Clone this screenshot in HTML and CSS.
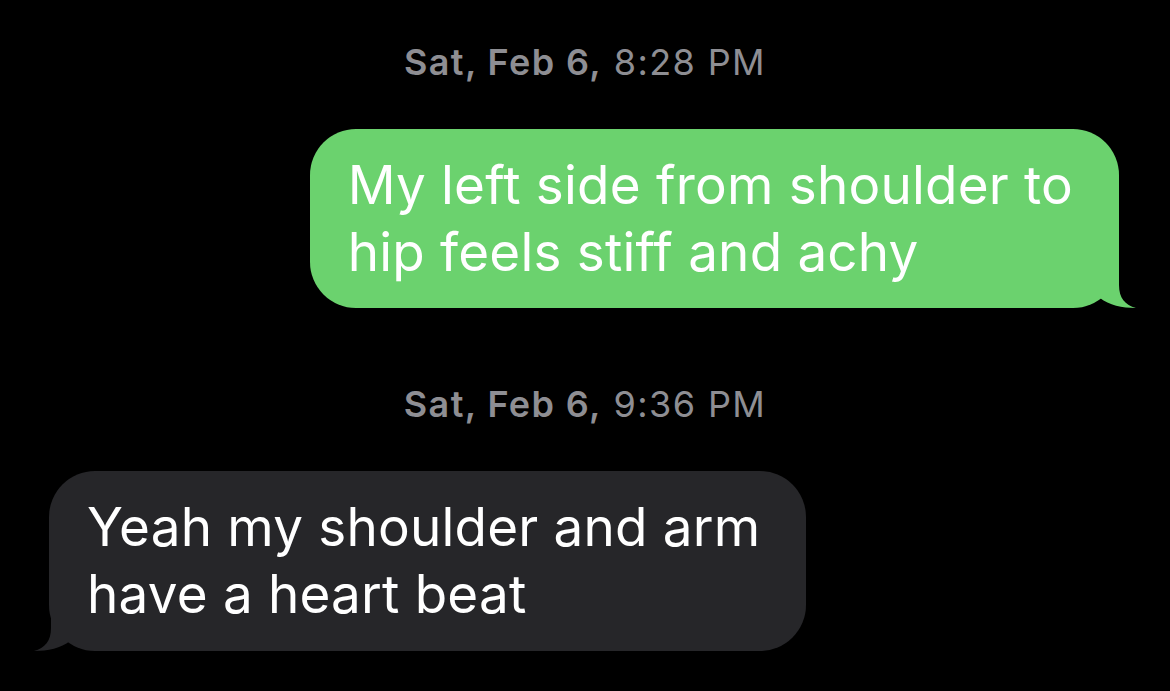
FILE: index.html
```html
<!DOCTYPE html>
<html lang="en">
<head>
  <meta charset="UTF-8">
  <meta name="viewport" content="width=device-width, initial-scale=1">
  <title>Messages</title>
  <link rel="stylesheet" href="styles.css">
</head>
<body>
  <div class="thread">
    <div class="stamp"><b>Sat, Feb 6,</b> 8:28 PM</div>

    <div class="row sent">
      <div class="bubble">
        <svg class="tail" viewBox="0 0 60 60" width="60" height="60">
          <path d="M41,0 L41,37 C41,50 47,57 58,60 C44,60 31,57 22,50 L0,50 L0,0 Z"/>
        </svg>
        <span class="text">My left side from shoulder to<br>hip feels stiff and achy</span>
      </div>
    </div>

    <div class="stamp"><b>Sat, Feb 6,</b> 9:36 PM</div>

    <div class="row received">
      <div class="bubble">
        <svg class="tail" viewBox="0 0 60 60" width="60" height="60">
          <path d="M41,0 L41,37 C41,50 47,57 58,60 C44,60 31,57 22,50 L0,50 L0,0 Z"/>
        </svg>
        <span class="text">Yeah my shoulder and arm<br>have a heart beat</span>
      </div>
    </div>
  </div>
</body>
</html>
```

FILE: styles.css
```css
body {
  margin: 0;
  background: #000;
  font-family: Inter, "Noto Sans", sans-serif;
}
.thread {
  display: flex;
  flex-direction: column;
  padding-top: 41px;
}
.stamp {
  text-align: center;
  color: #8e8e93;
  font-size: 36px;
  line-height: 42px;
  letter-spacing: 1.4px;
}
.stamp b {
  font-weight: 600;
}
.row {
  display: flex;
  margin-top: 46px;
}
.row.sent {
  justify-content: flex-end;
  padding-right: 51px;
  margin-bottom: 75px;
}
.row.received {
  justify-content: flex-start;
  padding-left: 49px;
}
.bubble {
  position: relative;
  color: #fff;
  font-size: 53px;
  line-height: 67px;
  letter-spacing: 0.2px;
  padding: 23px 46px 22px 38px;
  border-radius: 46px;
}
.bubble .text {
  position: relative;
}
.sent .bubble {
  background: #6bd26e;
}
.received .bubble {
  background: #262629;
  padding-bottom: 23px;
}
.tail {
  position: absolute;
  bottom: 0;
  right: -19px;
}
.sent .tail {
  fill: #6bd26e;
}
.received .tail {
  fill: #262629;
  right: auto;
  left: -17px;
  transform: scaleX(-1);
}
```
